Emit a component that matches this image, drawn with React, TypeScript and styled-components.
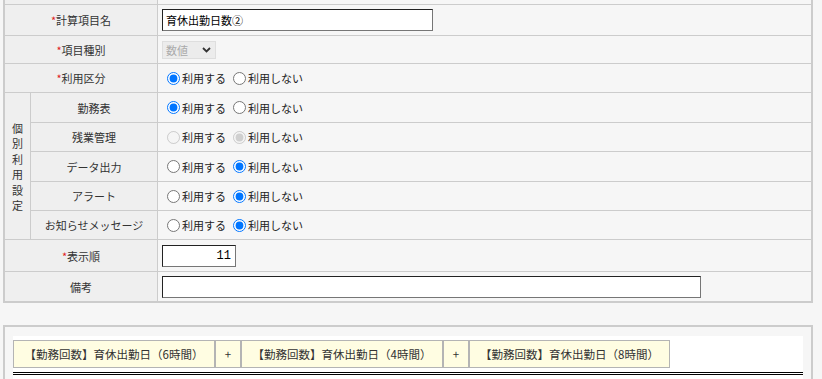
import React from 'react';
import styled, { createGlobalStyle } from 'styled-components';

const GlobalStyle = createGlobalStyle`
  html, body {
    margin: 0;
    padding: 0;
    background: #f6f6f6;
    font-family: "Noto Sans CJK JP", "Noto Sans", sans-serif;
    font-size: 11px;
    color: #333;
  }
`;

const Page = styled.div`
  width: 822px;
  height: 379px;
  overflow: hidden;
  padding-left: 3px;
  box-sizing: border-box;
`;

const FormTable = styled.div`
  width: 810px;
  border: 2px solid #cccccc;
  border-top: none;
  box-sizing: border-box;
  display: flex;
  flex-direction: column;
`;

const Row = styled.div<{ h: number }>`
  display: flex;
  height: ${({ h }) => h}px;
  border-bottom: 1px solid #cccccc;
  &:last-child {
    border-bottom: none;
  }
`;

const LabelCell = styled.div`
  width: 152px;
  flex-shrink: 0;
  background: #efefef;
  border-right: 1px solid #cccccc;
  display: flex;
  align-items: center;
  justify-content: center;
`;

const SubLabelCell = styled(LabelCell)`
  width: 126px;
`;

const ValueCell = styled.div`
  flex: 1;
  background: #f6f6f6;
  display: flex;
  align-items: center;
  padding-left: 4px;
`;

const Required = styled.span`
  color: #e02020;
`;

const GroupBlock = styled.div`
  display: flex;
  border-bottom: 1px solid #cccccc;
`;

const GroupLabel = styled.div`
  width: 25px;
  flex-shrink: 0;
  background: #efefef;
  border-right: 1px solid #cccccc;
  display: flex;
  flex-direction: column;
  align-items: center;
  justify-content: center;
  line-height: 15.5px;
  padding-top: 2px;
`;

const SubRows = styled.div`
  flex: 1;
  display: flex;
  flex-direction: column;
`;

const TextInput = styled.input<{ w: number; align?: string }>`
  width: ${({ w }) => w}px;
  height: 22px;
  box-sizing: border-box;
  border: 1px solid;
  border-color: #222 #767676 #767676 #222;
  background: #fff;
  font-family: "Noto Sans CJK JP", sans-serif;
  font-size: 11px;
  color: #000;
  padding: 0 3px;
  margin: 0;
  text-align: ${({ align }) => align || 'left'};
  outline: none;
`;

const NumberInput = styled(TextInput)`
  font-family: "Liberation Mono", "DejaVu Sans Mono", monospace;
  font-size: 12px;
  padding-right: 4px;
`;

const SelectWrap = styled.span`
  position: relative;
  display: inline-flex;
`;

const Select = styled.select`
  appearance: none;
  width: 54px;
  height: 18px;
  box-sizing: border-box;
  border: 1px solid #d4d4d4;
  background: #e8e8e8;
  color: #8a8a8a;
  font-family: "Noto Sans CJK JP", sans-serif;
  font-size: 11px;
  padding: 0 3px;
  margin: 0;
  line-height: 16px;
`;

const Chevron = styled.svg`
  position: absolute;
  right: 5px;
  top: 6px;
  pointer-events: none;
`;

const RadioGroup = styled.div`
  display: flex;
  align-items: center;
`;

const Option = styled.label`
  display: inline-flex;
  align-items: center;
  margin-right: 2px;
  color: #222;
`;

const Radio = styled.input`
  width: 13px;
  height: 13px;
  margin: 0 2px 0 5px;
`;

const FormulaPanel = styled.div`
  width: 810px;
  margin-top: 22px;
  border: 2px solid #cccccc;
  border-bottom: none;
  background: #f6f6f6;
  box-sizing: border-box;
  padding: 9px 8px 0;
  height: 60px;
`;

const FormulaArea = styled.div`
  background: #fff;
  padding-top: 4px;
  height: 60px;
`;

const FormulaRow = styled.div`
  display: flex;
  margin-bottom: 4px;
`;

const Term = styled.div<{ w: number }>`
  width: ${({ w }) => w}px;
  height: 28px;
  box-sizing: border-box;
  border: 1px solid #b4b4b4;
  background: #fffde2;
  display: flex;
  align-items: center;
  justify-content: center;
  color: #333;
  font-size: 11.5px;
`;

const DoubleRule = styled.div`
  border-top: 3px double #000;
`;

const usage: { label: string; on: boolean; disabled?: boolean; h: number }[] = [
  { label: '勤務表', on: true, h: 29 },
  { label: '残業管理', on: false, disabled: true, h: 28 },
  { label: 'データ出力', on: false, h: 29 },
  { label: 'アラート', on: false, h: 28 },
  { label: 'お知らせメッセージ', on: false, h: 28 },
];

const UseRadios: React.FC<{ name: string; on: boolean; disabled?: boolean }> = ({ name, on, disabled }) => (
  <RadioGroup>
    <Option>
      <Radio type="radio" name={name} defaultChecked={on} disabled={disabled} />
      利用する
    </Option>
    <Option>
      <Radio type="radio" name={name} defaultChecked={!on} disabled={disabled} />
      利用しない
    </Option>
  </RadioGroup>
);

const terms = [
  { text: '【勤務回数】育休出勤日（6時間）', w: 202 },
  { text: '+', w: 26 },
  { text: '【勤務回数】育休出勤日（4時間）', w: 202 },
  { text: '+', w: 26 },
  { text: '【勤務回数】育休出勤日（8時間）', w: 201 },
];

export default function App() {
  return (
    <Page>
      <GlobalStyle />
      <FormTable>
        <Row h={4}>
          <LabelCell />
          <ValueCell />
        </Row>
        <Row h={30}>
          <LabelCell>
            <Required>*</Required>計算項目名
          </LabelCell>
          <ValueCell>
            <TextInput w={271} defaultValue="育休出勤日数②" />
          </ValueCell>
        </Row>
        <Row h={27}>
          <LabelCell>
            <Required>*</Required>項目種別
          </LabelCell>
          <ValueCell>
            <SelectWrap>
              <Select disabled defaultValue="num">
                <option value="num">数値</option>
              </Select>
              <Chevron width="9" height="6" viewBox="0 0 9 6">
                <path d="M1 1 L4.5 4.5 L8 1" fill="none" stroke="#333" strokeWidth="1.8" />
              </Chevron>
            </SelectWrap>
          </ValueCell>
        </Row>
        <Row h={28}>
          <LabelCell>
            <Required>*</Required>利用区分
          </LabelCell>
          <ValueCell>
            <UseRadios name="kubun" on />
          </ValueCell>
        </Row>
        <GroupBlock>
          <GroupLabel>
            {'個別利用設定'.split('').map((c) => (
              <span key={c}>{c}</span>
            ))}
          </GroupLabel>
          <SubRows>
            {usage.map((u, i) => (
              <Row key={u.label} h={u.h}>
                <SubLabelCell>{u.label}</SubLabelCell>
                <ValueCell>
                  <UseRadios name={`u${i}`} on={u.on} disabled={u.disabled} />
                </ValueCell>
              </Row>
            ))}
          </SubRows>
        </GroupBlock>
        <Row h={31}>
          <LabelCell>
            <Required>*</Required>表示順
          </LabelCell>
          <ValueCell>
            <NumberInput w={74} align="right" defaultValue="11" />
          </ValueCell>
        </Row>
        <Row h={29}>
          <LabelCell>備考</LabelCell>
          <ValueCell>
            <TextInput w={539} defaultValue="" />
          </ValueCell>
        </Row>
      </FormTable>
      <FormulaPanel>
        <FormulaArea>
          <FormulaRow>
            {terms.map((t, i) => (
              <Term key={i} w={t.w}>
                {t.text}
              </Term>
            ))}
          </FormulaRow>
          <DoubleRule />
        </FormulaArea>
      </FormulaPanel>
    </Page>
  );
}
